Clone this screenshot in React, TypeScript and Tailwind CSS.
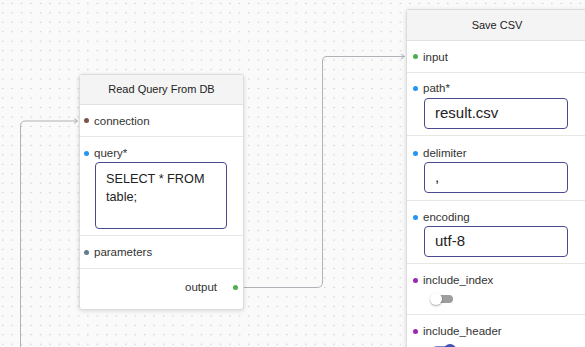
import React from "react";

const font = { fontFamily: '"Liberation Sans", Arial, sans-serif' };

function Dot({ cls }: { cls: string }) {
  return <span className={`block w-[5px] h-[5px] rounded-full shrink-0 ${cls}`} />;
}

function Label({ dot, text, pl }: { dot: string; text: string; pl: string }) {
  return (
    <div className={`flex items-center h-[16px] ${pl}`}>
      <Dot cls={dot} />
      <span className="ml-[5px] text-[11.5px] text-[#333] leading-[16px]">{text}</span>
    </div>
  );
}

function TextInput({ value }: { value: string }) {
  return (
    <div className="ml-[17px] w-[144px] h-[31px] border border-[#4a4a8e] rounded-[4px] flex items-center pl-[10px] text-[15px] text-[#222] bg-white">
      {value}
    </div>
  );
}

function Edges() {
  return (
    <svg className="absolute inset-0" width="585" height="347">
      <defs>
        <pattern id="dots" x="0" y="0" width="9.47" height="9.47" patternUnits="userSpaceOnUse">
          <circle cx="2.7" cy="3.3" r="0.7" fill="#c2c2c2" />
        </pattern>
      </defs>
      <rect width="585" height="347" fill="url(#dots)" />
      <path d="M20.5,347 L20.5,126 Q20.5,121 25.5,121 L77,121" fill="none" stroke="#b1b1b7" strokeWidth="1" />
      <path d="M74,118.5 L77.5,121 L74,123.5" fill="none" stroke="#b1b1b7" strokeWidth="1" />
      <path d="M243,287.5 L317,287.5 Q322.5,287.5 322.5,282 L322.5,61 Q322.5,56.5 327,56.5 L404,56.5" fill="none" stroke="#b1b1b7" strokeWidth="1" />
      <path d="M401,54 L404.5,56.5 L401,59" fill="none" stroke="#b1b1b7" strokeWidth="1" />
    </svg>
  );
}

export default function App() {
  return (
    <div className="relative w-[585px] h-[347px] overflow-hidden bg-[#fafafa]" style={font}>
      <Edges />

      {/* Read Query From DB */}
      <div className="absolute left-[79px] top-[74px] w-[165px] bg-white border border-[#dcdcdc] rounded-[3px] shadow-[0_1px_4px_rgba(0,0,0,0.14)]">
        <div className="h-[30px] flex items-center justify-center bg-[#f4f4f4] border-b border-[#e2e2e2] text-[11px] text-[#222]">
          Read Query From DB
        </div>
        <div className="h-[32px] flex items-center border-b border-[#e6e6e6]">
          <Label dot="bg-[#795548]" text="connection" pl="pl-[4px]" />
        </div>
        <div className="pt-[8px] pb-[6px] border-b border-[#e6e6e6]">
          <Label dot="bg-[#2196f3]" text="query*" pl="pl-[4px]" />
          <div className="mt-[1px] ml-[15px] w-[132px] h-[67px] border border-[#4a4a8e] rounded-[4px] pl-[10px] pt-[7px] text-[12.7px] leading-[18px] text-[#222]">
            SELECT * FROM
            <br />
            table;
          </div>
        </div>
        <div className="h-[33px] flex items-center border-b border-[#e6e6e6]">
          <Label dot="bg-[#607d8b]" text="parameters" pl="pl-[4px]" />
        </div>
        <div className="pt-[10px] pb-[14px] flex items-center justify-end pr-[5px]">
          <span className="text-[11.5px] text-[#333] leading-[16px]">output</span>
          <span className="ml-[16px]">
            <Dot cls="bg-[#4caf50]" />
          </span>
        </div>
      </div>

      {/* Save CSV */}
      <div className="absolute left-[406px] top-[9px] w-[182px] bg-white border border-[#dcdcdc] rounded-[3px] shadow-[0_1px_4px_rgba(0,0,0,0.14)]">
        <div className="h-[31px] flex items-center justify-center bg-[#f4f4f4] border-b border-[#e2e2e2] text-[11px] text-[#222]">
          Save CSV
        </div>
        <div className="h-[32px] flex items-center border-b border-[#e6e6e6]">
          <Label dot="bg-[#4caf50]" text="input" pl="pl-[6px]" />
        </div>
        <div className="pt-[7px] pb-[6px] border-b border-[#e6e6e6]">
          <Label dot="bg-[#2196f3]" text="path*" pl="pl-[6px]" />
          <div className="mt-[2px]">
            <TextInput value="result.csv" />
          </div>
        </div>
        <div className="pt-[9px] pb-[7px] border-b border-[#e6e6e6]">
          <Label dot="bg-[#2196f3]" text="delimiter" pl="pl-[6px]" />
          <div className="mt-[1px]">
            <TextInput value="," />
          </div>
        </div>
        <div className="pt-[8px] pb-[6px] border-b border-[#e6e6e6]">
          <Label dot="bg-[#2196f3]" text="encoding" pl="pl-[6px]" />
          <div className="mt-[1px]">
            <TextInput value="utf-8" />
          </div>
        </div>
        <div className="pt-[8px] pb-[8px] border-b border-[#e6e6e6]">
          <Label dot="bg-[#9c27b0]" text="include_index" pl="pl-[6px]" />
          <div className="mt-[4px] ml-[23px] relative w-[24px] h-[14px] flex items-center">
            <div className="absolute left-[4px] w-[19px] h-[8px] rounded-full bg-[#9e9e9e]" />
            <div className="absolute left-0 w-[12px] h-[12px] rounded-full bg-white shadow-[0_1px_2px_rgba(0,0,0,0.35)]" />
          </div>
        </div>
        <div className="pt-[8px] pb-[20px]">
          <Label dot="bg-[#9c27b0]" text="include_header" pl="pl-[6px]" />
          <div className="mt-[4px] ml-[26px] relative w-[24px] h-[14px] flex items-center">
            <div className="absolute left-0 w-[20px] h-[8px] rounded-full bg-[#7986cb]" />
            <div className="absolute left-[11px] w-[12px] h-[12px] rounded-full bg-[#3f51b5] shadow-[0_1px_2px_rgba(0,0,0,0.35)]" />
          </div>
        </div>
      </div>
    </div>
  );
}
